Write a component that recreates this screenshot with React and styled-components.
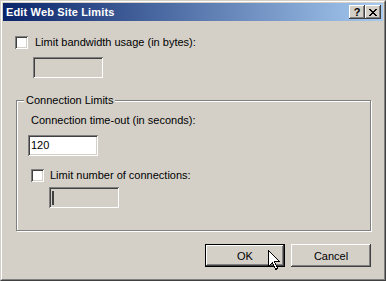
import React from "react";
import styled, { createGlobalStyle } from "styled-components";

const GlobalStyle = createGlobalStyle`
  html, body { margin: 0; padding: 0; background: #d4d0c8; }
  body {
    width: 386px; height: 281px; overflow: hidden;
    font-family: "Liberation Sans", Arial, sans-serif;
    font-size: 11px; color: #000;
  }
  * { box-sizing: border-box; }
`;

const Window = styled.div`
  position: relative;
  width: 386px;
  height: 281px;
  border: 1px solid;
  border-color: #d4d0c8 #404040 #404040 #d4d0c8;
  background: #d4d0c8;
`;

const Frame = styled.div`
  height: 100%;
  border: 1px solid;
  border-color: #ffffff #808080 #808080 #ffffff;
  padding: 1px;
  display: flex;
  flex-direction: column;
`;

const TitleBar = styled.div`
  height: 18px;
  flex: none;
  display: flex;
  align-items: center;
  padding-left: 3px;
  padding-right: 2px;
  background: linear-gradient(to right, #0a246a, #a6caf0);
`;

const Title = styled.div`
  flex: 1;
  color: #fff;
  font-weight: bold;
  font-size: 11px;
  letter-spacing: 0.15px;
  line-height: 18px;
`;

const CaptionButtons = styled.div`
  display: flex;
  gap: 0px;
`;

const CaptionButton = styled.div`
  width: 16px;
  height: 14px;
  background: #d4d0c8;
  box-shadow: inset -1px -1px #404040, inset 1px 1px #fff,
    inset -2px -2px #808080, inset 2px 2px #d4d0c8;
  display: flex;
  align-items: center;
  justify-content: center;
  font-weight: bold;
  font-size: 11px;
  line-height: 14px;
  color: #000;
`;

const Client = styled.div`
  flex: 1;
  display: flex;
  flex-direction: column;
  align-items: flex-start;
`;

const CheckRow = styled.label`
  display: flex;
  align-items: center;
  gap: ${(p) => p.$gap || 7}px;
  margin-top: ${(p) => p.$top}px;
  margin-left: ${(p) => p.$left}px;
  height: 13px;
  line-height: 13px;
  white-space: nowrap;
`;

const CheckBox = styled.span`
  width: 13px;
  height: 13px;
  flex: none;
  background: #fff;
  box-shadow: inset 1px 1px #808080, inset -1px -1px #fff,
    inset 2px 2px #404040, inset -2px -2px #d4d0c8;
`;

const TextBox = styled.div`
  width: 70px;
  height: 21px;
  margin-top: ${(p) => p.$top}px;
  margin-left: ${(p) => p.$left}px;
  background: ${(p) => (p.$disabled ? "#d4d0c8" : "#fff")};
  box-shadow: inset 1px 1px #808080, inset -1px -1px #fff,
    inset 2px 2px #404040, inset -2px -2px #d4d0c8;
  padding: 0 3px;
  display: flex;
  align-items: center;
  line-height: 13px;
`;

const Caret = styled.span`
  width: 2px;
  height: 14px;
  background: #404040;
`;

const Group = styled.fieldset`
  margin: 16px 12px 0 13px;
  align-self: stretch;
  height: 137px;
  border: 1px solid #808080;
  box-shadow: inset 1px 1px #fff, 1px 1px #fff;
  padding: 7px 11px 0 11px;
  min-width: 0;
  display: flex;
  flex-direction: column;
  align-items: flex-start;
`;

const Legend = styled.legend`
  margin-left: -4px;
  padding: 0 2px;
  line-height: 13px;
  background: #d4d0c8;
`;

const Text = styled.div`
  margin-left: ${(p) => p.$left || 0}px;
  line-height: 13px;
  white-space: nowrap;
`;

const ButtonRow = styled.div`
  align-self: stretch;
  display: flex;
  justify-content: flex-end;
  gap: 6px;
  margin-top: 13px;
  padding-right: 12px;
`;

const Button = styled.div`
  width: 80px;
  height: 23px;
  display: flex;
  align-items: center;
  justify-content: center;
  background: #d4d0c8;
  ${(p) =>
    p.$default
      ? `border: 1px solid #000;
         box-shadow: inset -1px -1px #404040, inset 1px 1px #fff,
           inset -2px -2px #808080;`
      : `box-shadow: inset -1px -1px #404040, inset 1px 1px #fff,
           inset -2px -2px #808080, inset 2px 2px #d4d0c8;`}
`;

const Cursor = styled.svg`
  position: absolute;
  left: 267px;
  top: 249px;
`;

function CloseGlyph() {
  return (
    <svg width="8" height="7" viewBox="0 0 8 7" shapeRendering="crispEdges">
      <path
        d="M0 0h2v1H0zM6 0h2v1H6zM1 1h2v1H1zM5 1h2v1H5zM2 2h4v1H2zM3 3h2v1H3zM2 4h4v1H2zM1 5h2v1H1zM5 5h2v1H5zM0 6h2v1H0zM6 6h2v1H6z"
        fill="#000"
      />
    </svg>
  );
}

export default function App() {
  return (
    <>
      <GlobalStyle />
      <Window>
        <Frame>
          <TitleBar>
            <Title>Edit Web Site Limits</Title>
            <CaptionButtons>
              <CaptionButton>?</CaptionButton>
              <CaptionButton>
                <CloseGlyph />
              </CaptionButton>
            </CaptionButtons>
          </TitleBar>
          <Client>
            <CheckRow $top={15} $left={12}>
              <CheckBox />
              <span>Limit bandwidth usage (in bytes):</span>
            </CheckRow>
            <TextBox $top={8} $left={30} $disabled />
            <Group>
              <Legend>Connection Limits</Legend>
              <Text $left={3}>Connection time-out (in seconds):</Text>
              <TextBox $top={8} $left={0}>
                120
              </TextBox>
              <CheckRow $top={13} $left={3} $gap={6}>
                <CheckBox />
                <span>Limit number of connections:</span>
              </CheckRow>
              <TextBox $top={5} $left={21} $disabled>
                <Caret />
              </TextBox>
            </Group>
            <ButtonRow>
              <Button $default>OK</Button>
              <Button>Cancel</Button>
            </ButtonRow>
          </Client>
        </Frame>
        <Cursor width="13" height="21" viewBox="0 0 13 21" shapeRendering="crispEdges">
          <path
            d="M0.5 0.5 L0.5 16.5 L4.5 12.5 L7.5 19.5 L9.5 18.5 L6.5 11.5 L11.5 11.5 Z"
            fill="#fff"
            stroke="#000"
            strokeWidth="1"
          />
        </Cursor>
      </Window>
    </>
  );
}
